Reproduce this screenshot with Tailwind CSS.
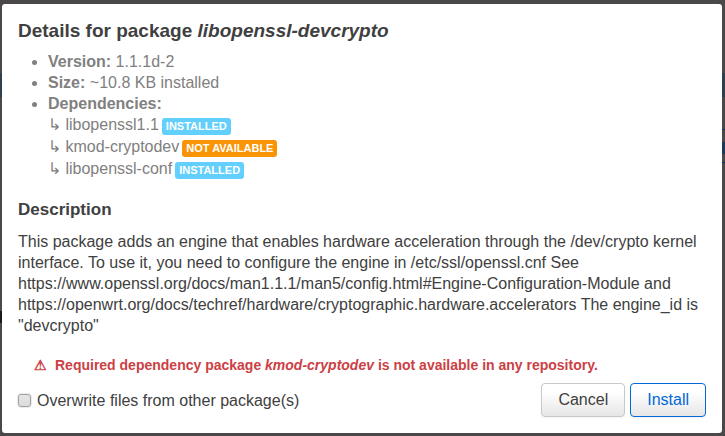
<!DOCTYPE html>
<html lang="en">
  <head>
    <meta charset="UTF-8" />
    <meta name="viewport" content="width=device-width, initial-scale=1.0" />
    <title>Details for package libopenssl-devcrypto</title>
    <script src="https://cdn.jsdelivr.net/npm/@tailwindcss/browser@4"></script>
  </head>
  <body class="bg-[#4a4848] font-['Liberation_Sans',Arial,sans-serif] text-base leading-[21px] text-[#404040]">
    <!-- Dimmed page behind the dialog -->
    <div class="absolute inset-x-0 top-[73px] h-6 bg-[#2f404e]"></div>
    <div class="absolute right-0 top-[129px] h-px w-1 bg-[#123158]"></div>
    <div class="absolute right-0 top-[142px] h-3 w-1 bg-[#1b3860]"></div>
    <div class="absolute right-0 top-[162px] h-px w-1 bg-[#123158]"></div>
    <div class="absolute left-0 top-[311px] h-3 w-0.5 bg-[#191920]"></div>

    <!-- Dialog -->
    <div role="dialog" aria-labelledby="title" class="relative mt-1 mr-[3px] mb-[3px] ml-0.5 rounded-[3px] bg-white p-4">
      <h4 id="title" class="text-[19px] leading-[22px] font-bold">Details for package <em>libopenssl-devcrypto</em></h4>

      <ul class="mt-[9px] ml-[30px] list-disc text-[#808080]">
        <li><strong>Version:</strong> 1.1.1d-2</li>
        <li><strong>Size:</strong> ~10.8 KB installed</li>
        <li>
          <strong>Dependencies:</strong>
          <ul class="leading-[22px]">
            <li class="flex items-center gap-[3px]"><span>↳ libopenssl1.1</span><span class="mt-0.5 rounded-[3px] bg-[#62cffc] px-1 text-[11px] leading-[17px] font-bold text-white">INSTALLED</span></li>
            <li class="flex items-center gap-[3px]"><span>↳ kmod-cryptodev</span><span class="mt-0.5 rounded-[3px] bg-[#f89406] px-1 text-[11px] leading-[17px] font-bold text-white">NOT AVAILABLE</span></li>
            <li class="flex items-center gap-[3px]"><span>↳ libopenssl-conf</span><span class="mt-0.5 rounded-[3px] bg-[#62cffc] px-1 text-[11px] leading-[17px] font-bold text-white">INSTALLED</span></li>
          </ul>
        </li>
      </ul>

      <h5 class="mt-[19px] text-[17px] leading-[22px] font-bold">Description</h5>
      <p class="mt-[10px]">
        This package adds an engine that enables hardware acceleration through the /dev/crypto kernel interface. To use it, you need to configure the engine in /etc/ssl/openssl.cnf See https://www.openssl.org/docs/man1.1.1/man5/config.html#Engine-Configuration-Module and https://openwrt.org/docs/techref/hardware/cryptographic.hardware.accelerators The engine_id is "devcrypto"
      </p>

      <!-- Errors -->
      <ul class="mt-[19px] ml-4 text-sm leading-[21px] font-bold text-[#cc4044]">
        <li class="flex gap-2"><span>⚠</span><span>Required dependency package <em>kmod-cryptodev</em> is not available in any repository.</span></li>
      </ul>

      <div class="mt-[7px] flex items-center justify-between">
        <label for="overwrite" class="flex items-center gap-[6px]">
          <input id="overwrite" type="checkbox" class="size-[13px] appearance-none rounded-[3px] border border-[#a0a0a0] bg-linear-to-b from-[#e6e6e6] to-[#dcdcdc] shadow-[0_0_1px_1px_#ececec]" />
          Overwrite files from other package(s)
        </label>
        <div class="flex gap-[5px]">
          <button type="button" class="rounded-[4px] border border-[#c8c8c8] bg-linear-to-b from-white from-25% to-[#e6e6e6] px-4 py-[5px] leading-[22px] shadow-[0_1px_2px_rgba(0,0,0,0.05)]">Cancel</button>
          <button type="button" class="rounded-[4px] border border-[#0069d6] bg-linear-to-b from-white from-25% to-[#e6e6e6] px-4 py-[5px] leading-[22px] text-[#0069d6] shadow-[0_1px_2px_rgba(0,0,0,0.05)]">Install</button>
        </div>
      </div>
    </div>
  </body>
</html>
